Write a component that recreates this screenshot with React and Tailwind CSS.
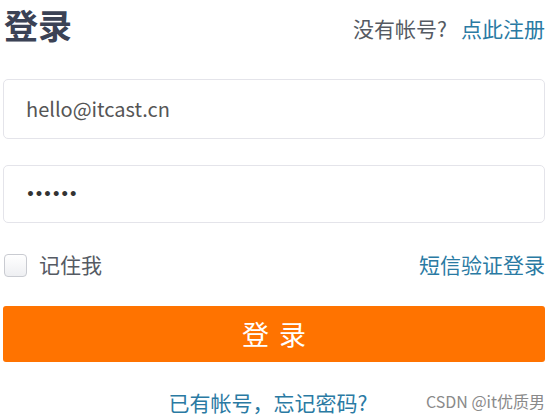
export default function App() {
  const font = { fontFamily: '"Microsoft YaHei", "Noto Sans CJK SC", "Noto Sans", sans-serif' };
  return (
    <div className="w-[560px] h-[420px] bg-white relative overflow-hidden" style={font}>
      <div className="w-[542px] ml-[3px] flex flex-col">
        <div className="flex items-start justify-between h-[46px]">
          <h1 className="text-[34px] leading-[50px] font-bold text-[#3b4255] ml-[1px] -mb-[4px]">登录</h1>
          <p className="text-[21px] leading-[26px] text-[#555a63] mt-[15px]">
            没有帐号?<span className="ml-[14px] text-[#2a7aa3]">点此注册</span>
          </p>
        </div>
        <div className="mt-[33px] h-[60px] border border-[#e4e4ea] rounded-[5px] flex items-center pl-[22px] text-[20px] text-[#555]">
          hello@itcast.cn
        </div>
        <div
          className="mt-[26px] h-[58px] border border-[#e4e4ea] rounded-[5px] flex items-center pl-[22px] text-[14px] font-bold text-[#333] tracking-[-0.4px]"
          style={{ fontFamily: '"DejaVu Sans", sans-serif' }}
        >
          ••••••
        </div>
        <div className="mt-[28px] h-[28px] flex items-center justify-between">
          <label className="flex items-center gap-[12px] text-[21px] text-[#555a63]">
            <span className="w-[23px] h-[23px] ml-[1px] rounded-[4px] border border-[#c9cbd1] bg-gradient-to-b from-white to-[#eeeff2]" />
            记住我
          </label>
          <span className="text-[21px] text-[#2a7aa3]">短信验证登录</span>
        </div>
        <button className="mt-[27px] h-[56px] bg-[#ff7300] rounded-[3px] text-white text-[27px] tracking-[10px] pl-[10px]">
          登录
        </button>
        <p className="mt-[25px] text-center text-[21px] leading-[30px] text-[#2a7aa3] pr-[12px]">已有帐号，忘记密码?</p>
      </div>
      <span className="absolute right-[15px] bottom-[7px] text-[16px] text-[#8a8a8a]">CSDN @it优质男</span>
    </div>
  );
}
